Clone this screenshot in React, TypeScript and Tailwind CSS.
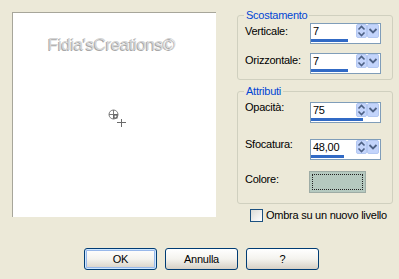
import React from "react";

const font = { fontFamily: '"Liberation Sans", Arial, sans-serif' };

function UpDown() {
  return (
    <div className="w-[11px] h-[14px] bg-[#c3d4fb] border border-[#b4c8f2] rounded-[2px] flex items-center justify-center">
      <svg width="9" height="12" viewBox="0 0 9 12">
        <path d="M1.5 4.5 L4.5 1.5 L7.5 4.5" stroke="#4d6185" strokeWidth="1.6" fill="none" />
        <path d="M1.5 7.5 L4.5 10.5 L7.5 7.5" stroke="#4d6185" strokeWidth="1.6" fill="none" />
      </svg>
    </div>
  );
}

function Drop() {
  return (
    <div className="w-[12px] h-[14px] bg-[#c3d4fb] border border-[#b4c8f2] rounded-[2px] flex items-center justify-center">
      <svg width="10" height="8" viewBox="0 0 10 8">
        <path d="M1.5 2 L5 5.5 L8.5 2" stroke="#4d6185" strokeWidth="1.8" fill="none" />
      </svg>
    </div>
  );
}

function Spin({ value, bar }: { value: string; bar: number }) {
  return (
    <div className="w-[71px] h-[21px] border border-[#7f9db9] bg-white flex flex-col">
      <div className="h-[14px] flex">
        <div className="flex-1 pl-[2px] pt-[1px] leading-[13px] text-black">{value}</div>
        <UpDown />
        <Drop />
        <div className="w-[1px]" />
      </div>
      <div className="mt-[1px] h-[3px] bg-[#316ac5]" style={{ width: bar }} />
    </div>
  );
}

function Row({ label, mt, children }: { label: string; mt: string; children: React.ReactNode }) {
  return (
    <div className="flex items-start">
      <div className={`w-[72px] pl-[7px] leading-[13px] ${mt}`}>{label}</div>
      {children}
    </div>
  );
}

function XPButton({ label, def }: { label: string; def?: boolean }) {
  return (
    <div
      className={`w-[73px] h-[22px] rounded-[3px] border border-[#003c74] bg-linear-to-b from-white via-[#f4f3ee] to-[#d6d0c5] flex items-center justify-center leading-[13px] text-black ${
        def ? "shadow-[inset_0_0_0_1px_#cee7ff,inset_0_0_0_2px_#98b8ea]" : ""
      }`}
    >
      {label}
    </div>
  );
}

export default function App() {
  return (
    <div
      className="w-[399px] h-[279px] bg-[#ece9d8] text-[11px] tracking-[-0.25px] text-black flex flex-col overflow-hidden"
      style={font}
    >
      <div className="flex items-start pt-[12px] pl-[12px]">
        {/* preview */}
        <div className="relative w-[204px] h-[205px] bg-white border-l border-t border-[#a7a69a]">
          <div
            className="absolute left-[35px] top-[23px] text-[17px] leading-[17px] tracking-[-0.4px] text-[#d4d4d4]"
            style={{ textShadow: "-1px 1px 0 #a8a8a8" }}
          >
            Fidia'sCreations©
          </div>
          <svg className="absolute left-[93px] top-[93px]" width="24" height="24" viewBox="0 0 24 24">
            <circle cx="7.5" cy="8.5" r="4.5" stroke="#7a7a7a" strokeWidth="1" fill="none" />
            <path d="M7.5 4 V13 M3 8.5 H12" stroke="#7a7a7a" strokeWidth="1" />
            <rect x="8" y="9" width="3" height="3" fill="none" stroke="#555" strokeWidth="1" />
            <path d="M15.5 13 V21 M11 16.5 H20" stroke="#6a6a6a" strokeWidth="1" />
          </svg>
        </div>

        {/* right column */}
        <div className="ml-[21px] mt-[3px] w-[156px] flex flex-col">
          <div className="relative h-[65px] border border-[#d0d0bf] rounded-[3px] pt-[7px]">
            <span className="absolute left-[6px] top-[-7px] px-[2px] bg-[#ece9d8] text-[#0046d5] leading-[13px]">
              Scostamento
            </span>
            <Row label="Verticale:" mt="mt-[2px]">
              <Spin value="7" bar={37} />
            </Row>
            <div className="h-[9px]" />
            <Row label="Orizzontale:" mt="mt-[1px]">
              <Spin value="7" bar={37} />
            </Row>
          </div>

          <div className="relative mt-[11px] h-[113px] border border-[#d0d0bf] rounded-[3px] pt-[10px]">
            <span className="absolute left-[6px] top-[-7px] px-[2px] bg-[#ece9d8] text-[#0046d5] leading-[13px]">
              Attributi
            </span>
            <Row label="Opacità:" mt="mt-[-1px]">
              <Spin value="75" bar={52} />
            </Row>
            <div className="h-[16px]" />
            <Row label="Sfocatura:" mt="mt-[-1px]">
              <Spin value="48,00" bar={33} />
            </Row>
            <div className="h-[11px]" />
            <div className="flex items-start">
              <div className="w-[71px] pl-[7px] leading-[13px] mt-[2px]">Colore:</div>
              <div className="w-[57px] h-[22px] bg-[#b5c9bf] border border-[#9eaca5] p-[2px]">
                <div className="w-full h-full border border-dotted border-[#222]" />
              </div>
            </div>
          </div>

          <div className="mt-[5px] flex items-center pl-[13px]">
            <div className="w-[13px] h-[13px] border border-[#1c5180] bg-linear-to-br from-[#dcdcd7] to-white" />
            <span className="ml-[3px] leading-[13px]">Ombra su un nuovo livello</span>
          </div>
        </div>
      </div>

      <div className="mt-[26px] pl-[84px] flex gap-[8px]">
        <XPButton label="OK" def />
        <XPButton label="Annulla" />
        <XPButton label="?" />
      </div>
    </div>
  );
}
